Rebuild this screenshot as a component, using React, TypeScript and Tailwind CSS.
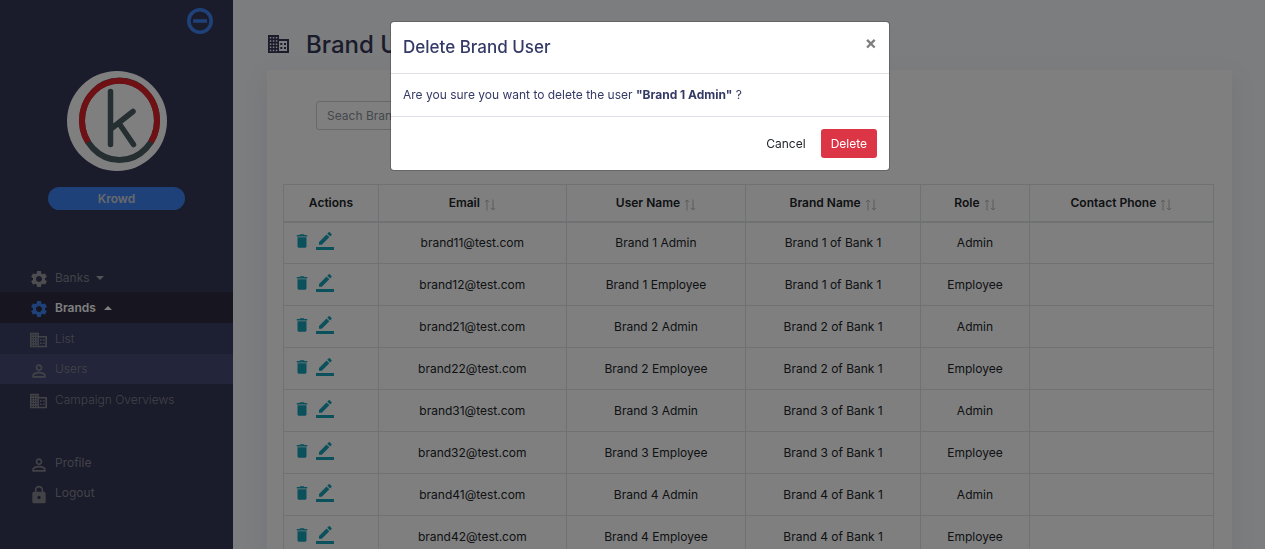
import type { ReactNode } from "react";
import { MdDelete, MdLock, MdPersonOutline, MdSettings } from "react-icons/md";

const users = [
  { email: "brand11@test.com", name: "Brand 1 Admin", brand: "Brand 1 of Bank 1", role: "Admin" },
  { email: "brand12@test.com", name: "Brand 1 Employee", brand: "Brand 1 of Bank 1", role: "Employee" },
  { email: "brand21@test.com", name: "Brand 2 Admin", brand: "Brand 2 of Bank 1", role: "Admin" },
  { email: "brand22@test.com", name: "Brand 2 Employee", brand: "Brand 2 of Bank 1", role: "Employee" },
  { email: "brand31@test.com", name: "Brand 3 Admin", brand: "Brand 3 of Bank 1", role: "Admin" },
  { email: "brand32@test.com", name: "Brand 3 Employee", brand: "Brand 3 of Bank 1", role: "Employee" },
  { email: "brand41@test.com", name: "Brand 4 Admin", brand: "Brand 4 of Bank 1", role: "Admin" },
  { email: "brand42@test.com", name: "Brand 4 Employee", brand: "Brand 4 of Bank 1", role: "Employee" },
];

function Logo() {
  return (
    <svg viewBox="0 0 100 100" className="size-[100px]" role="img" aria-label="Krowd">
      <circle cx="50" cy="50" r="50" fill="#fff" />
      <g fill="none" stroke="#4a5c60" strokeWidth="6">
        <ellipse cx="52.5" cy="49.3" rx="37.5" ry="39.7" />
        <path d="M21 71A37.500 39.700 0 1 1 84 71" stroke="#dd2029" />
        <path d="M43.500 20.500V73.500M44.500 57.500L66 40.500M52.500 53L66.500 73.500" strokeWidth="5.500" strokeLinecap="round" />
      </g>
    </svg>
  );
}

function BuildingIcon({ className }: { className: string }) {
  return (
    <svg viewBox="0 0 21 18" className={className} aria-hidden="true">
      <path
        fill="currentColor"
        fillRule="evenodd"
        d="M0 0H11V4H21V18H0ZM11 6V16H19V6ZM1.800 2H3.300V3.500H1.800ZM4.800 2H6.300V3.500H4.800ZM7.800 2H9.300V3.500H7.800ZM1.800 5.200H3.300V6.700H1.800ZM4.800 5.200H6.300V6.700H4.800ZM7.800 5.200H9.300V6.700H7.800ZM1.800 8.400H3.300V9.900H1.800ZM4.800 8.400H6.300V9.900H4.800ZM7.800 8.400H9.300V9.900H7.800ZM1.800 11.600H3.300V13.100H1.800ZM4.800 11.600H6.300V13.100H4.800ZM7.800 11.600H9.300V13.100H7.800ZM1.800 14.800H3.300V16.300H1.800ZM4.800 14.800H6.300V16.300H4.800ZM7.800 14.800H9.300V16.300H7.800Z"
      />
      <path fill="currentColor" d="M12.300 8H14.300V10H12.300ZM16 8H18V10H16ZM12.300 12H14.300V14H12.300ZM16 12H18V14H16Z" />
    </svg>
  );
}

function EditIcon() {
  return (
    <svg viewBox="0 0 24 24" className="size-[18px]" fill="currentColor" aria-hidden="true">
      <path d="M17.750 7L14 3.250l-10 10V17h3.750l10-10zm2.960-2.960c.39-.39.39-1.020 0-1.410L18.370.29c-.39-.39-1.020-.39-1.410 0L15 2.250 18.750 6l1.960-1.960zM0 20h24v4H0z" />
    </svg>
  );
}

function NavItem({ icon, children, className }: { icon: ReactNode; children: ReactNode; className: string }) {
  return (
    <li className={className}>
      <a href="#" className="flex h-full items-center pl-7">
        <span className="mt-[3px] flex w-[21px] justify-center text-xl">{icon}</span>
        <span className="ml-[6px] flex items-center">{children}</span>
      </a>
    </li>
  );
}

function Sidebar() {
  return (
    <aside className="w-[233px] shrink-0 bg-[#343656] text-xs text-[#84868f]">
      <div className="flex justify-end pt-[5px] pr-[17px]">
        <button type="button" aria-label="Collapse menu" className="text-[#3f83f4]">
          <svg viewBox="0 0 32 32" className="size-8" fill="none" stroke="currentColor" strokeWidth="3.600" aria-hidden="true">
            <circle cx="16" cy="16" r="11.200" />
            <path d="M9.200 16H23" />
          </svg>
        </button>
      </div>
      <div className="mt-[34px] flex flex-col items-center">
        <Logo />
        <div className="mt-4 h-[23px] w-[137px] rounded-full bg-[#3f83f4] text-center leading-[23px] font-semibold text-[#d0d2d8]">Krowd</div>
      </div>
      <nav>
        <ul className="mt-[53px]">
          <NavItem className="h-[29px]" icon={<MdSettings className="text-[#9a9a9e]" />}>
            Banks
            <span className="ml-[6px] border-x-4 border-t-4 border-x-transparent border-t-[#a6a6aa]" />
          </NavItem>
          <NavItem className="h-[31px] bg-[#2c2b40] font-semibold text-white" icon={<MdSettings className="text-[#3f83f4]" />}>
            Brands
            <span className="ml-2 border-x-4 border-b-4 border-x-transparent border-b-white" />
          </NavItem>
          <NavItem className="h-[31px] bg-[#3b4066] font-light" icon={<BuildingIcon className="h-4 w-[17px]" />}>List</NavItem>
          <NavItem className="h-[30px] bg-[#474a75] font-light" icon={<MdPersonOutline />}>Users</NavItem>
          <NavItem className="h-[31px] font-light" icon={<BuildingIcon className="h-4 w-[17px]" />}>Campaign Overviews</NavItem>
        </ul>
        <ul className="mt-[33px]">
          <NavItem className="h-[30px]" icon={<MdPersonOutline />}>Profile</NavItem>
          <NavItem className="h-[30px]" icon={<MdLock />}>Logout</NavItem>
        </ul>
      </nav>
    </aside>
  );
}

function SortHeader({ children, className }: { children: ReactNode; className: string }) {
  return (
    <th className={`border border-b-2 border-[#dee2e6] font-semibold ${className}`}>
      <button type="button" className="inline-flex items-center gap-1">
        {children}
        <svg viewBox="0 0 12 12" className="mt-1 size-3" fill="none" stroke="#b8b8b8" aria-hidden="true">
          <path d="M3 1V11.500M1 3L3 1L5 3M9 .500V11M7 9L9 11L11 9" />
        </svg>
      </button>
    </th>
  );
}

const cell = "border border-[#dee2e6]";

function UserTable() {
  return (
    <table className="mt-[54px] w-full table-fixed border-collapse text-center text-xs text-[#212529]">
      <thead>
        <tr className="h-[37px]">
          <th className="w-[10.2%] border border-b-2 border-[#dee2e6] font-semibold">Actions</th>
          <SortHeader className="w-[20.2%]">Email</SortHeader>
          <SortHeader className="w-[19.3%]">User Name</SortHeader>
          <SortHeader className="w-[18.8%]">Brand Name</SortHeader>
          <SortHeader className="w-[11.7%]">Role</SortHeader>
          <SortHeader className="w-[19.8%]">Contact Phone</SortHeader>
        </tr>
      </thead>
      <tbody>
        {users.map((u) => (
          <tr key={u.email} className="h-[42px]">
            <td className={cell}>
              <div className="flex items-center gap-[5px] pb-1 pl-[9px] text-[#17a2b8]">
                <button type="button" aria-label={`Delete ${u.name}`}><MdDelete size={18} /></button>
                <button type="button" aria-label={`Edit ${u.name}`}><EditIcon /></button>
              </div>
            </td>
            <td className={cell}>{u.email}</td>
            <td className={cell}>{u.name}</td>
            <td className={cell}>{u.brand}</td>
            <td className={cell}>{u.role}</td>
            <td className={cell}></td>
          </tr>
        ))}
      </tbody>
    </table>
  );
}

function DeleteDialog() {
  return (
    <div className="fixed inset-0 z-10 flex items-start justify-center bg-black/50 pt-[21px] pl-[15px]">
      <div role="dialog" aria-modal="true" aria-labelledby="dialog-title" className="w-[500px] rounded border border-black/20 bg-white bg-clip-padding text-xs text-[#343a66]">
        <div className="flex items-start justify-between border-b border-[#dee2e6] p-3">
          <h2 id="dialog-title" className="text-[17px] leading-[27px] font-medium">Delete Brand User</h2>
          <button type="button" aria-label="Close" className="text-lg leading-[18px] font-bold text-[#7f7f7f]">×</button>
        </div>
        <p className="px-3 py-3 leading-[18px]">
          Are you sure you want to delete the user <b className="font-bold">"Brand 1 Admin"</b> ?
        </p>
        <div className="flex justify-end gap-[5px] border-t border-[#dee2e6] p-3">
          <button type="button" className="h-[29px] rounded-sm px-[10px] text-[#212529]">Cancel</button>
          <button type="button" className="h-[29px] rounded-[3px] bg-[#dc3545] px-[10px] text-white">Delete</button>
        </div>
      </div>
    </div>
  );
}

export default function App() {
  return (
    <div className="flex h-screen overflow-hidden bg-[#f8fafe] font-['Inter','Liberation_Sans',sans-serif]">
      <Sidebar />
      <main className="min-w-0 flex-1 pt-7 pr-[33px] pl-[34px]">
        <h1 className="flex h-[33px] items-center gap-[17px] pl-px text-2xl font-medium text-[#343656]">
          <BuildingIcon className="mb-[2px] h-[18px] w-[21px]" />
          Brand Users
        </h1>
        <section className="mt-[9px] min-h-screen bg-white pt-[31px] pr-[18px] pl-4 shadow-[0_8px_24px_rgba(80,90,120,0.1)]">
          <input aria-label="Search brand users" placeholder="Seach Brand User" className="ml-[33px] block h-[29px] w-[200px] rounded-[3px] border border-[#ced4da] px-[10px] text-xs text-[#495057] placeholder:text-[#8a9097]" />
          <UserTable />
        </section>
      </main>
      <DeleteDialog />
    </div>
  );
}
